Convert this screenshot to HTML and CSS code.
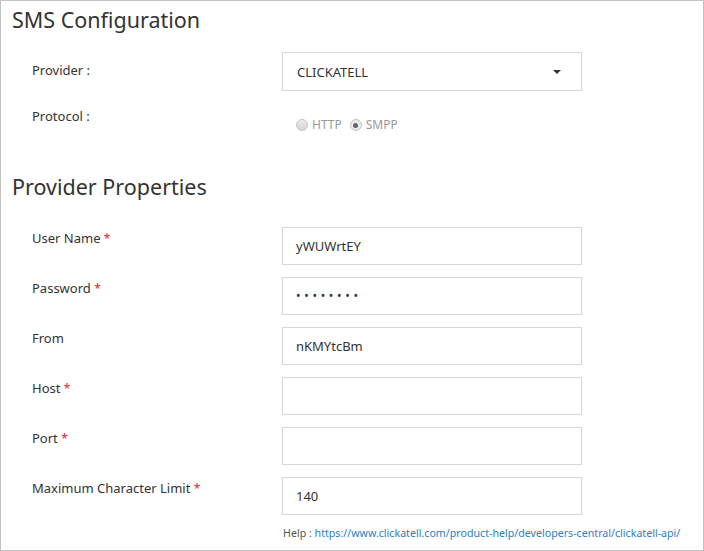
FILE: index.html
```html
<!DOCTYPE html>
<html lang="en">
<head>
<meta charset="utf-8">
<title>SMS Configuration</title>
<link rel="stylesheet" href="styles.css">
</head>
<body>
<div class="panel">
  <h2 class="title first">SMS Configuration</h2>
  <div class="row row-provider">
    <div class="label">Provider :</div>
    <div class="field">
      <div class="select">
        <span>CLICKATELL</span>
        <svg class="caret" width="8" height="4" viewBox="0 0 8 4"><path d="M0 0h8L4 4z" fill="#333"/></svg>
      </div>
    </div>
  </div>
  <div class="row row-protocol">
    <div class="label">Protocol :</div>
    <div class="field radios">
      <label class="radio"><span class="dot"></span>HTTP</label>
      <label class="radio"><span class="dot checked"></span>SMPP</label>
    </div>
  </div>

  <h2 class="title second">Provider Properties</h2>
  <div class="row prop">
    <div class="label">User Name <span class="req">*</span></div>
    <div class="field"><input class="input" type="text" value="yWUWrtEY"></div>
  </div>
  <div class="row prop">
    <div class="label">Password <span class="req">*</span></div>
    <div class="field"><div class="input pw">••••••••</div></div>
  </div>
  <div class="row prop">
    <div class="label">From</div>
    <div class="field"><input class="input" type="text" value="nKMYtcBm"></div>
  </div>
  <div class="row prop">
    <div class="label">Host <span class="req">*</span></div>
    <div class="field"><input class="input" type="text" value=""></div>
  </div>
  <div class="row prop">
    <div class="label">Port <span class="req">*</span></div>
    <div class="field"><input class="input" type="text" value=""></div>
  </div>
  <div class="row prop">
    <div class="label">Maximum Character Limit <span class="req">*</span></div>
    <div class="field"><input class="input" type="text" value="140"></div>
  </div>
  <div class="help">Help : <a href="#">https://www.clickatell.com/product-help/developers-central/clickatell-api/</a></div>
</div>
</body>
</html>
```
FILE: styles.css
```css
html, body {
  margin: 0;
  padding: 0;
  background: #fff;
}
body {
  font-family: "Noto Sans", "Open Sans", sans-serif;
  color: #333;
}
.panel {
  width: 704px;
  height: 551px;
  box-sizing: border-box;
  border: 1px solid #c2c2c2;
  padding: 0 0 0 11px;
  overflow: hidden;
}
.title {
  margin: 0;
  font-weight: 400;
  font-size: 21.5px;
  line-height: 30px;
  color: #333;
}
.title.first {
  margin-top: 4px;
}
.title.second {
  margin-top: 37px;
}
.row {
  display: grid;
  grid-template-columns: 250px 300px;
  margin-left: 20px;
}
.label {
  font-size: 13px;
  line-height: 20px;
  color: #333;
}
.row-provider {
  margin-top: 17px;
}
.row-provider .label {
  padding-top: 8px;
}
.row-protocol {
  margin-top: 10px;
}
.row-protocol .label {
  padding-top: 5px;
}
.select {
  height: 39px;
  box-sizing: border-box;
  border: 1px solid #d3d8dd;
  display: flex;
  align-items: center;
  justify-content: space-between;
  padding: 0 20px 0 14px;
  font-size: 13px;
  color: #333;
}
.caret {
  display: block;
}
.radios {
  display: flex;
  align-items: center;
  gap: 8px;
  padding: 14px 0 0 14px;
  font-size: 12px;
  line-height: 20px;
  color: #999;
}
.radio {
  display: flex;
  align-items: center;
  gap: 4px;
}
.dot {
  width: 12px;
  height: 12px;
  box-sizing: border-box;
  border-radius: 50%;
  border: 1px solid #c4c4c4;
  background: linear-gradient(#ececec, #d4d4d4);
  position: relative;
}
.dot.checked {
  background: #ececec;
}
.dot.checked::after {
  content: "";
  position: absolute;
  left: 2.5px;
  top: 2.5px;
  width: 5px;
  height: 5px;
  border-radius: 50%;
  background: #666;
}
.prop {
  margin-top: 12px;
}
.title.second + .prop {
  margin-top: 25px;
}
.prop .label {
  padding-top: 1px;
}
.input {
  display: block;
  width: 300px;
  height: 38px;
  box-sizing: border-box;
  border: 1px solid #d3d8dd;
  border-radius: 0;
  padding: 0 13px;
  margin: 0;
  font-family: inherit;
  font-size: 13px;
  color: #333;
  background: #fff;
  outline: none;
}
.pw {
  line-height: 36px;
  letter-spacing: 3.7px;
  font-size: 12px;
}
.req {
  color: #e0262b;
  font-size: 12px;
}
.help {
  margin: 9px 0 0 271px;
  font-size: 10.65px;
  line-height: 18px;
  color: #555;
}
.help a {
  color: #2a80c0;
  text-decoration: none;
}
```
